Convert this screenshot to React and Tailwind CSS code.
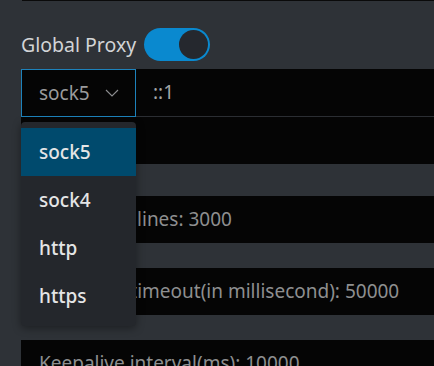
export default function App() {
  const font = { fontFamily: '"Noto Sans", "Open Sans", sans-serif' };
  return (
    <div
      className="relative w-[434px] h-[366px] overflow-hidden bg-[#2e3237]"
      style={font}
    >
      <div className="ml-[22px] h-px bg-[#0a0a0a]" />
      <div className="pl-[21px]">
        <div className="flex items-center gap-[8px] mt-[27px] h-[33px]">
          <span className="text-[19.5px] leading-none text-[#d2d4d6]">Global Proxy</span>
          <div className="relative w-[66px] h-[33px] rounded-full bg-[#0a89cf] flex items-center justify-end pr-[2px]">
            <div className="w-[29px] h-[29px] rounded-full bg-[#25282e]" />
          </div>
        </div>

        <div className="mt-[8px] flex h-[48px]">
          <div className="w-[115px] shrink-0 border border-[#1d82bb] bg-[#050505] flex items-center pl-[17px] gap-[15px]">
            <span className="text-[19px] text-[#9a9b9c]">sock5</span>
            <svg width="14" height="8" viewBox="0 0 14 8" fill="none">
              <path d="M1 1 L7 7 L13 1" stroke="#8d8e90" strokeWidth="1.1" />
            </svg>
          </div>
          <div className="flex-1 bg-[#050505] border-b border-[#2b2e33] flex items-center pl-[17px]">
            <span className="text-[19px] text-[#a3a4a5]">::1</span>
          </div>
        </div>
        <div className="h-[47px] bg-[#050505]" />

        <div className="mt-[32px] h-[47px] bg-[#050505] flex items-center pl-[18px]">
          <span className="text-[19px] text-[#8e8f90] whitespace-nowrap">Log buffer lines: 3000</span>
        </div>
        <div className="mt-[25px] h-[47px] bg-[#050505] flex items-center pl-[18px]">
          <span className="text-[19px] text-[#8e8f90] whitespace-nowrap">Response timeout(in millisecond): 50000</span>
        </div>
        <div className="mt-[25px] h-[47px] bg-[#050505] flex items-center pl-[18px]">
          <span className="text-[19px] text-[#8e8f90] whitespace-nowrap">Keepalive interval(ms): 10000</span>
        </div>
      </div>

      <div className="absolute left-[21px] top-[122px] w-[115px] rounded-[4px] bg-[#24272c] py-[6px] shadow-[0_2px_8px_rgba(0,0,0,0.4)]">
        {["sock5", "sock4", "http", "https"].map((o, i) => (
          <div
            key={o}
            className={
              "h-[48px] flex items-center pl-[18px] text-[19px] font-medium text-[#e4e5e6] " +
              (i === 0 ? "bg-[#004a6d]" : "")
            }
          >
            {o}
          </div>
        ))}
      </div>
    </div>
  );
}
